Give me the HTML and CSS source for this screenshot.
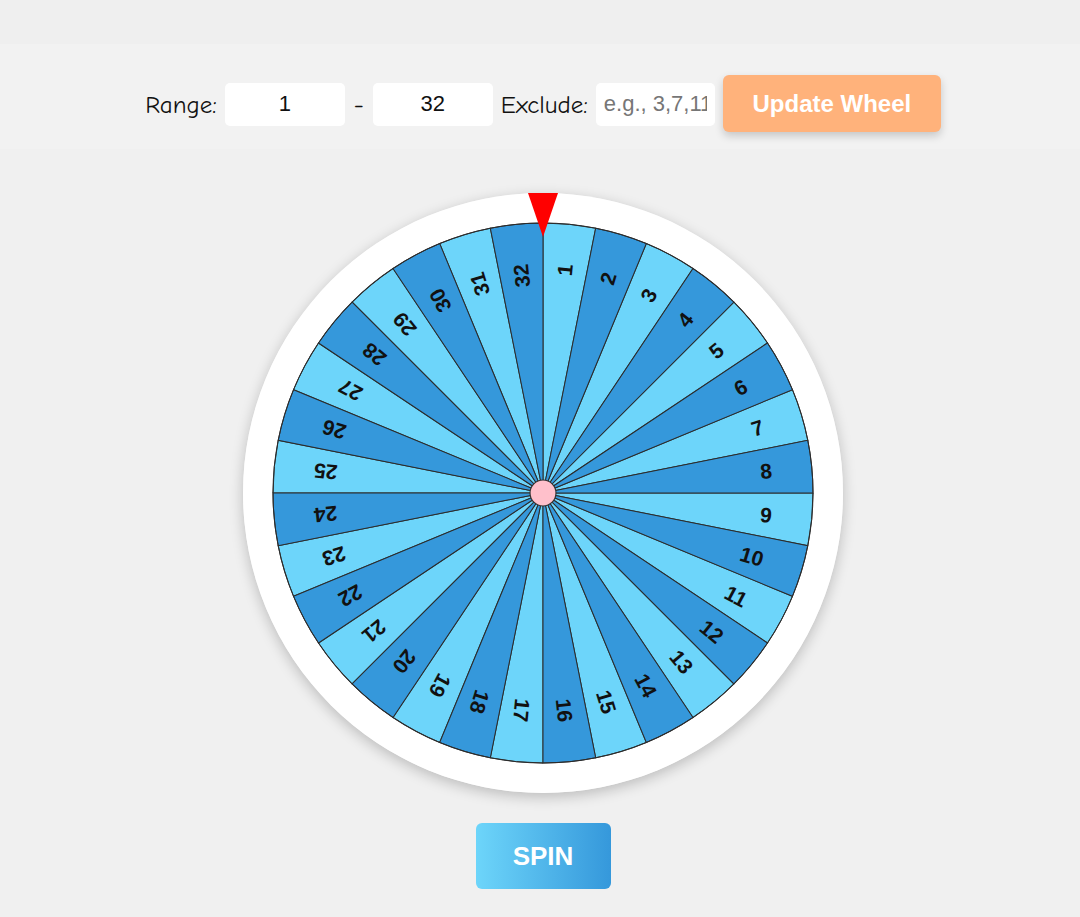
FILE: index.html
```html
<!DOCTYPE html>
<html>
<head>
<meta charset="utf-8">
<link rel="stylesheet" href="styles.css">
</head>
<body>
<div class="top-strip"></div>
<div class="controls">
  <span class="label">Range:</span>
  <input class="field" type="text" value="1">
  <span class="label dash">-</span>
  <input class="field" type="text" value="32">
  <span class="label">Exclude:</span>
  <input class="field exclude" type="text" placeholder="e.g., 3,7,11">
  <button class="update">Update Wheel</button>
</div>
<main class="stage">
  <div class="wheel-wrap">
    <svg class="wheel" viewBox="-300 -300 600 600" width="600" height="600">
      <defs>
        <path id="wedge" d="M0 0 L0 -270 A270 270 0 0 1 52.674 -264.812 Z" stroke="#2b2b2b" stroke-width="1"/>
      </defs>
      <circle cx="0" cy="0" r="300" fill="#fff"/>
      <g class="light">
        <use href="#wedge" transform="rotate(0)"/>
        <use href="#wedge" transform="rotate(22.5)"/>
        <use href="#wedge" transform="rotate(45)"/>
        <use href="#wedge" transform="rotate(67.5)"/>
        <use href="#wedge" transform="rotate(90)"/>
        <use href="#wedge" transform="rotate(112.5)"/>
        <use href="#wedge" transform="rotate(135)"/>
        <use href="#wedge" transform="rotate(157.5)"/>
        <use href="#wedge" transform="rotate(180)"/>
        <use href="#wedge" transform="rotate(202.5)"/>
        <use href="#wedge" transform="rotate(225)"/>
        <use href="#wedge" transform="rotate(247.5)"/>
        <use href="#wedge" transform="rotate(270)"/>
        <use href="#wedge" transform="rotate(292.5)"/>
        <use href="#wedge" transform="rotate(315)"/>
        <use href="#wedge" transform="rotate(337.5)"/>
      </g>
      <g class="dark">
        <use href="#wedge" transform="rotate(11.25)"/>
        <use href="#wedge" transform="rotate(33.75)"/>
        <use href="#wedge" transform="rotate(56.25)"/>
        <use href="#wedge" transform="rotate(78.75)"/>
        <use href="#wedge" transform="rotate(101.25)"/>
        <use href="#wedge" transform="rotate(123.75)"/>
        <use href="#wedge" transform="rotate(146.25)"/>
        <use href="#wedge" transform="rotate(168.75)"/>
        <use href="#wedge" transform="rotate(191.25)"/>
        <use href="#wedge" transform="rotate(213.75)"/>
        <use href="#wedge" transform="rotate(236.25)"/>
        <use href="#wedge" transform="rotate(258.75)"/>
        <use href="#wedge" transform="rotate(281.25)"/>
        <use href="#wedge" transform="rotate(303.75)"/>
        <use href="#wedge" transform="rotate(326.25)"/>
        <use href="#wedge" transform="rotate(348.75)"/>
      </g>
      <circle cx="0" cy="0" r="270" fill="none" stroke="#2b2b2b" stroke-width="1"/>
      <g class="nums">
        <text transform="rotate(5.625) rotate(-90)" x="230">1</text>
        <text transform="rotate(16.875) rotate(-90)" x="230">2</text>
        <text transform="rotate(28.125) rotate(-90)" x="230">3</text>
        <text transform="rotate(39.375) rotate(-90)" x="230">4</text>
        <text transform="rotate(50.625) rotate(-90)" x="230">5</text>
        <text transform="rotate(61.875) rotate(-90)" x="230">6</text>
        <text transform="rotate(73.125) rotate(-90)" x="230">7</text>
        <text transform="rotate(84.375) rotate(-90)" x="230">8</text>
        <text transform="rotate(95.625) rotate(-90)" x="230">9</text>
        <text transform="rotate(106.875) rotate(-90)" x="230">10</text>
        <text transform="rotate(118.125) rotate(-90)" x="230">11</text>
        <text transform="rotate(129.375) rotate(-90)" x="230">12</text>
        <text transform="rotate(140.625) rotate(-90)" x="230">13</text>
        <text transform="rotate(151.875) rotate(-90)" x="230">14</text>
        <text transform="rotate(163.125) rotate(-90)" x="230">15</text>
        <text transform="rotate(174.375) rotate(-90)" x="230">16</text>
        <text transform="rotate(185.625) rotate(-90)" x="230">17</text>
        <text transform="rotate(196.875) rotate(-90)" x="230">18</text>
        <text transform="rotate(208.125) rotate(-90)" x="230">19</text>
        <text transform="rotate(219.375) rotate(-90)" x="230">20</text>
        <text transform="rotate(230.625) rotate(-90)" x="230">21</text>
        <text transform="rotate(241.875) rotate(-90)" x="230">22</text>
        <text transform="rotate(253.125) rotate(-90)" x="230">23</text>
        <text transform="rotate(264.375) rotate(-90)" x="230">24</text>
        <text transform="rotate(275.625) rotate(-90)" x="230">25</text>
        <text transform="rotate(286.875) rotate(-90)" x="230">26</text>
        <text transform="rotate(298.125) rotate(-90)" x="230">27</text>
        <text transform="rotate(309.375) rotate(-90)" x="230">28</text>
        <text transform="rotate(320.625) rotate(-90)" x="230">29</text>
        <text transform="rotate(331.875) rotate(-90)" x="230">30</text>
        <text transform="rotate(343.125) rotate(-90)" x="230">31</text>
        <text transform="rotate(354.375) rotate(-90)" x="230">32</text>
      </g>
      <circle cx="0" cy="0" r="13" fill="#ffc0cb" stroke="#333" stroke-width="1.2"/>
    </svg>
    <svg class="pointer" viewBox="0 0 30 44" width="30" height="44">
      <polygon points="0,0 30,0 15,44" fill="#ff0000"/>
    </svg>
  </div>
  <button class="spin">SPIN</button>
</main>
</body>
</html>
```

FILE: styles.css
```css
html, body {
  margin: 0;
  padding: 0;
}
body {
  background: #f0f0f0;
  font-family: "Liberation Sans", Arial, sans-serif;
  width: 1080px;
  height: 917px;
  overflow: hidden;
}
.top-strip {
  height: 44px;
  background: #efefef;
}
.controls {
  height: 105px;
  background: #f2f2f2;
  display: flex;
  align-items: center;
  justify-content: center;
  gap: 8px;
  padding-top: 15px;
  padding-left: 6px;
  box-sizing: border-box;
}
.label {
  font-family: "Comic Neue", "Comic Sans MS", "Open Sans", sans-serif;
  font-size: 25px;
  color: #111;
  line-height: 1;
}
.dash {
  padding: 0 1px;
}
.field {
  width: 120px;
  height: 43px;
  box-sizing: border-box;
  border: none;
  border-radius: 5px;
  background: #fff;
  font-family: "Liberation Sans", Arial, sans-serif;
  font-size: 22px;
  text-align: center;
  color: #111;
  padding: 0 8px;
  outline: none;
}
.field.exclude {
  width: 119px;
  text-align: left;
  font-size: 22px;
}
.field::placeholder {
  color: #767676;
}
.update {
  width: 218px;
  height: 57px;
  border: none;
  border-radius: 6px;
  background: #ffb27b;
  color: #fff;
  font-family: "Liberation Sans", Arial, sans-serif;
  font-weight: bold;
  font-size: 24px;
  box-shadow: 0 4px 8px rgba(0, 0, 0, 0.18);
  margin-top: -1px;
}
.stage {
  display: flex;
  flex-direction: column;
  align-items: center;
  padding-top: 44px;
  padding-left: 6px;
}
.wheel-wrap {
  position: relative;
  width: 600px;
  height: 600px;
  border-radius: 50%;
  box-shadow: 0 4px 14px rgba(0, 0, 0, 0.22);
}
.wheel {
  display: block;
}
.light use {
  fill: #6dd5fa;
}
.dark use {
  fill: #3598db;
}
.nums text {
  font-family: "Liberation Sans", Arial, sans-serif;
  font-weight: bold;
  font-size: 21px;
  fill: #111;
  text-anchor: end;
  dominant-baseline: central;
}
.pointer {
  position: absolute;
  top: 0;
  left: 285px;
}
.spin {
  margin-top: 30px;
  width: 135px;
  height: 66px;
  border: none;
  border-radius: 6px;
  background: linear-gradient(to right, #6dd5fa, #3598db);
  color: #fff;
  font-family: "Liberation Sans", Arial, sans-serif;
  font-weight: bold;
  font-size: 26px;
}
```
